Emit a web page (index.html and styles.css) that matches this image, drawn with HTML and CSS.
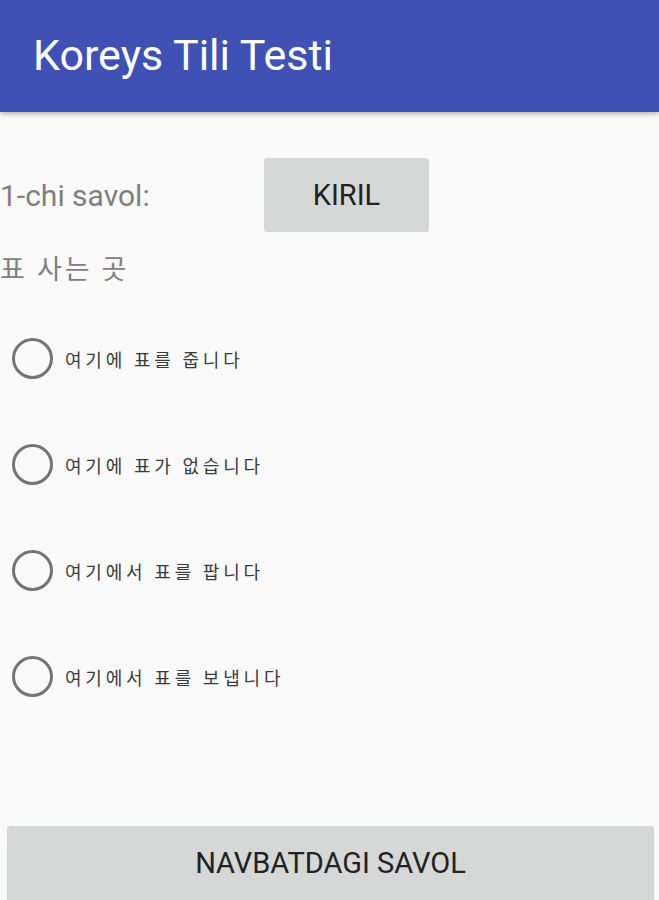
FILE: index.html
```html
<!DOCTYPE html>
<html lang="uz">
<head>
<meta charset="utf-8">
<title>Koreys Tili Testi</title>
<link rel="stylesheet" href="styles.css">
</head>
<body>
<header class="appbar">
  <h1 class="title">Koreys Tili Testi</h1>
</header>
<main class="content">
  <div class="question-row">
    <span class="question-num">1-chi savol:</span>
    <button class="btn btn-kiril" type="button">KIRIL</button>
  </div>
  <p class="question-text">표 사는 곳</p>
  <div class="options">
    <label class="option"><span class="radio"></span><span class="option-label">여기에 표를 줍니다</span></label>
    <label class="option"><span class="radio"></span><span class="option-label">여기에 표가 없습니다</span></label>
    <label class="option"><span class="radio"></span><span class="option-label">여기에서 표를 팝니다</span></label>
    <label class="option"><span class="radio"></span><span class="option-label">여기에서 표를 보냅니다</span></label>
  </div>
  <div class="bottom">
    <button class="btn btn-next" type="button">NAVBATDAGI SAVOL</button>
  </div>
</main>
</body>
</html>
```
FILE: styles.css
```css
* { box-sizing: border-box; }
html, body { margin: 0; padding: 0; }
body {
  width: 659px;
  height: 900px;
  overflow: hidden;
  background: #fafafa;
  font-family: Roboto, "Noto Sans CJK KR", sans-serif;
}
.appbar {
  height: 112px;
  background: #3f51b5;
  display: flex;
  align-items: center;
  padding-left: 33px;
  box-shadow: 0 2px 5px rgba(0,0,0,0.28);
  position: relative;
  z-index: 1;
}
.title {
  margin: 0;
  margin-top: -2px;
  color: #fff;
  font-weight: 400;
  font-size: 43px;
}
.content {
  display: flex;
  flex-direction: column;
  height: 788px;
}
.question-row {
  display: flex;
  align-items: center;
  margin-top: 46px;
  height: 74px;
}
.question-num {
  width: 264px;
  font-size: 30px;
  color: #808080;
}
.btn {
  border: none;
  background: #d6d7d7;
  border-radius: 3px;
  font-family: Roboto, sans-serif;
  font-size: 29px;
  color: #222;
  padding: 0;
}
.btn-kiril {
  width: 165px;
  height: 74px;
}
.question-text {
  margin: 16px 0 0;
  font-size: 27px;
  color: #808080;
  font-family: "Noto Sans CJK KR", sans-serif;
  letter-spacing: 3px;
  line-height: 40px;
}
.options {
  display: flex;
  flex-direction: column;
  gap: 65px;
  margin-top: 50px;
}
.option {
  display: flex;
  align-items: center;
  height: 41px;
  padding-left: 12px;
}
.radio {
  width: 41px;
  height: 41px;
  border: 3px solid #747474;
  border-radius: 50%;
  flex: none;
}
.option-label {
  margin-left: 12px;
  font-size: 18px;
  color: #3a3a3a;
  font-family: "Noto Sans CJK KR", sans-serif;
  letter-spacing: 3.8px;
}
.bottom {
  margin-top: auto;
  padding: 0 5px 0 7px;
}
.btn-next {
  width: 100%;
  height: 82px;
  border-radius: 3px 3px 0 0;
  margin-bottom: -8px;
  padding-bottom: 8px;
}
```
